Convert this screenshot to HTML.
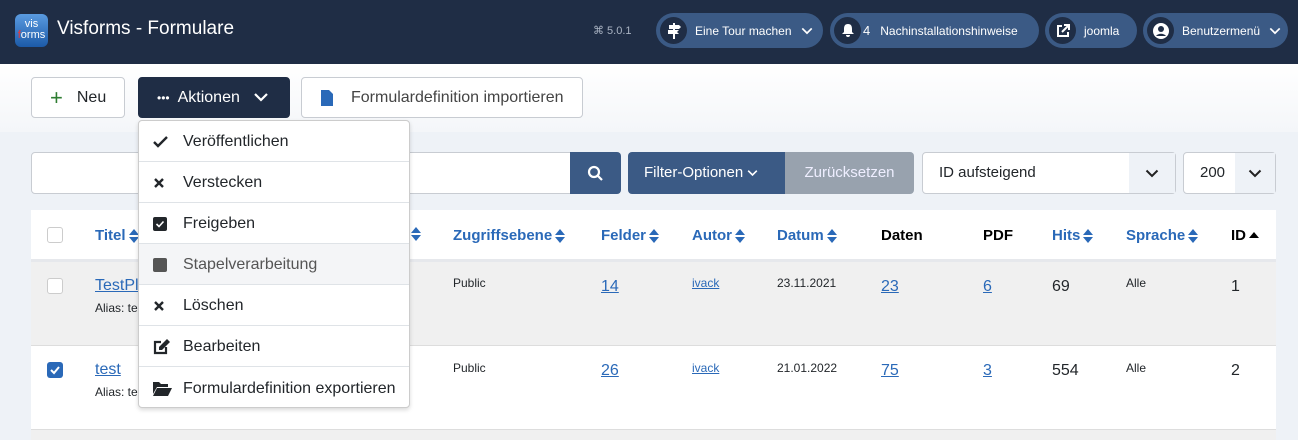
<!DOCTYPE html>
<html><head><meta charset="utf-8"><style>
*{box-sizing:border-box;margin:0;padding:0}
body{width:1298px;height:440px;overflow:hidden;background:#eef2f7;font-family:"Liberation Sans",sans-serif;position:relative;color:#22262a}
.abs{position:absolute}
.hdr{left:0;top:0;width:1298px;height:64px;background:#1f2d45}
.pill{top:13px;height:35px;border-radius:18px;background:#3b5a85;color:#fff;font-size:12px;display:flex;align-items:center}
.pill .ic{width:27px;height:27px;border-radius:50%;background:#1f2d45;margin-left:4px;display:flex;align-items:center;justify-content:center;margin-right:8px}
.tb{left:0;top:64px;width:1298px;height:68px;background:linear-gradient(#fff,#f4f6f9)}
.btn{top:77px;height:41px;border:1px solid #c8ccd2;border-radius:4px;background:#fff;font-size:16px;display:flex;align-items:center;color:#22262a}
.menu{left:138px;top:120px;width:272px;height:288px;background:#fff;border:1px solid #ccc;border-radius:4px;box-shadow:0 2px 4px rgba(0,0,0,.15);z-index:5}
.mi{height:41px;border-bottom:1px solid #dfe3e7;display:flex;align-items:center;font-size:16px;padding-left:14px;padding-top:2px}
.mi:last-child{border-bottom:none}
.mi .i{width:30px;display:flex;align-items:center}
.th{font-size:15px;font-weight:bold;color:#2a69b8;top:227px;display:flex;align-items:center}
.th.k{color:#000}
.c{font-size:12px}
.l{color:#2a69b8;text-decoration:underline;font-size:16px}
.s{margin-left:3px}
</style></head><body>
<svg width="0" height="0" style="position:absolute"><defs><symbol id="srt" viewBox="0 0 10 14"><path d="M5 0l5 6H0zM5 14L0 8h10z" fill="#2a69b8"/></symbol><symbol id="chv" viewBox="0 0 14 9"><path d="M1.5 1.5l5.5 5.5 5.5-5.5" stroke="currentColor" stroke-width="2" fill="none"/></symbol></defs></svg>
<div class="abs hdr"></div>
<div class="abs" style="left:15px;top:14px;width:33px;height:33px;border-radius:6px;background:linear-gradient(#5a9be0,#1c5aa8);color:#fff;font-size:11px;line-height:11px;text-align:center;padding-top:5px">vis<br><span style="color:#e33">f</span>orms</div>
<div class="abs" style="left:57px;top:18px;color:#fff;font-size:19px">Visforms - Formulare</div>
<div class="abs" style="left:593px;top:24px;color:#aab4c3;font-size:11px">⌘ 5.0.1</div>
<div class="abs pill" style="left:656px;width:167px"><span class="ic"><svg width="14" height="16" viewBox="0 0 14 16"><path d="M7 0v16" stroke="#fff" stroke-width="2"/><path d="M2 2h10l2 2-2 2H2zM1 7h11l-2 2 2 2H1z" fill="#fff"/></svg></span>Eine Tour machen<svg style="margin-left:9px;color:#fff" width="12" height="8"><use href="#chv"/></svg></div>
<div class="abs pill" style="left:830px;width:209px"><span class="ic"><svg width="14" height="15" viewBox="0 0 14 15"><path d="M7 1c3 0 4 2 4 5v3l2 2H1l2-2V6c0-3 1-5 4-5zM5 12h4a2 2 0 01-4 0z" fill="#fff"/></svg></span><span style="font-size:13px;margin-left:-6px;margin-right:10px">4</span>Nachinstallationshinweise</div>
<div class="abs pill" style="left:1045px;width:92px"><span class="ic"><svg width="14" height="14" viewBox="0 0 14 14" fill="none" stroke="#fff" stroke-width="2"><path d="M6 2H2v10h10V8M8 1h5v5M13 1L6 8"/></svg></span>joomla</div>
<div class="abs pill" style="left:1143px;width:145px"><span class="ic"><svg width="18" height="18" viewBox="0 0 18 18"><circle cx="9" cy="9" r="8" fill="#fff"/><circle cx="9" cy="7" r="3" fill="#1f2d45"/><path d="M4 14c2-3 8-3 10 0" fill="#1f2d45"/></svg></span>Benutzermenü<svg style="margin-left:9px;color:#fff" width="12" height="8"><use href="#chv"/></svg></div>

<div class="abs tb"></div>
<div class="abs btn" style="left:31px;width:94px;padding-left:18px"><span style="color:#2e7d32;font-size:22px;margin-right:14px">+</span>Neu</div>
<div class="abs btn" style="left:138px;width:152px;background:#1f2d45;border-color:#1f2d45;color:#fff;padding-left:18px"><span style="font-size:12px;margin-right:8px">•••</span>Aktionen<span style="margin-left:14px"><svg width="14" height="9" viewBox="0 0 14 9"><path d="M1 1l6 6 6-6" stroke="#fff" stroke-width="2.2" fill="none"/></svg></span></div>
<div class="abs btn" style="left:301px;width:282px;padding-left:19px"><svg width="12" height="16" viewBox="0 0 12 16"><path d="M0 0h8l4 4v12H0z" fill="#2a69b8"/></svg><span style="margin-left:18px;color:#444">Formulardefinition importieren</span></div>

<div class="abs" style="left:31px;top:152px;width:540px;height:42px;background:#fff;border:1px solid #c8ccd2;border-radius:4px 0 0 4px"></div>
<div class="abs" style="left:570px;top:152px;width:51px;height:42px;background:#3b5a85;border-radius:0 4px 4px 0"><svg style="margin:13px 0 0 17px" width="16" height="16" viewBox="0 0 16 16" fill="none" stroke="#fff" stroke-width="2.2"><circle cx="7" cy="7" r="5"/><path d="M11 11l4 4"/></svg></div>
<div class="abs" style="left:628px;top:152px;width:157px;height:42px;background:#3b5a85;border-radius:4px 0 0 4px;color:#fff;font-size:15px;line-height:42px;padding-left:16px">Filter-Optionen <svg style="color:#fff" width="11" height="8"><use href="#chv"/></svg></div>
<div class="abs" style="left:785px;top:152px;width:129px;height:42px;background:#98a2ae;border-radius:0 4px 4px 0;color:#eef;font-size:15px;line-height:42px;text-align:center">Zurücksetzen</div>
<div class="abs" style="left:922px;top:152px;width:254px;height:42px;background:#fff;border:1px solid #c8ccd2;border-radius:4px;font-size:15px;line-height:40px;padding-left:16px">ID aufsteigend<div class="abs" style="right:0;top:0;width:46px;height:40px;background:#eef2f7;text-align:center;color:#222"><svg style="margin-top:16px" width="14" height="9"><use href="#chv"/></svg></div></div>
<div class="abs" style="left:1183px;top:152px;width:93px;height:42px;background:#fff;border:1px solid #c8ccd2;border-radius:4px;font-size:15px;line-height:40px;padding-left:16px">200<div class="abs" style="right:0;top:0;width:40px;height:40px;background:#eef2f7;text-align:center;color:#222"><svg style="margin-top:16px" width="14" height="9"><use href="#chv"/></svg></div></div>

<div class="abs" style="left:31px;top:210px;width:1245px;height:52px;background:#fff;border-bottom:3px solid #e6e8ec"></div>
<div class="abs" style="left:31px;top:262px;width:1245px;height:84px;background:#f0f0f0;border-bottom:1px solid #ddd"></div>
<div class="abs" style="left:31px;top:346px;width:1245px;height:84px;background:#fff;border-bottom:1px solid #ddd"></div>
<div class="abs" style="left:31px;top:430px;width:1245px;height:10px;background:#f0f0f0"></div>

<div class="abs" style="left:47px;top:227px;width:16px;height:16px;border:1px solid #ccc;border-radius:3px;background:#fff"></div>
<div class="abs" style="left:47px;top:278px;width:16px;height:16px;border:1px solid #ccc;border-radius:3px;background:#fff"></div>
<div class="abs" style="left:47px;top:362px;width:16px;height:16px;border-radius:3px;background:#2a69b8"><svg width="16" height="16" viewBox="0 0 16 16"><path d="M4 8l3 3 5-6" stroke="#fff" stroke-width="2" fill="none"/></svg></div>

<div class="abs th" style="left:95px">Titel<svg class="s" width="10" height="14"><use href="#srt"/></svg></div>
<div class="abs th" style="left:411px"><svg width="10" height="14"><use href="#srt"/></svg></div>
<div class="abs th" style="left:453px">Zugriffsebene<svg class="s" width="10" height="14"><use href="#srt"/></svg></div>
<div class="abs th" style="left:601px">Felder<svg class="s" width="10" height="14"><use href="#srt"/></svg></div>
<div class="abs th" style="left:692px">Autor<svg class="s" width="10" height="14"><use href="#srt"/></svg></div>
<div class="abs th" style="left:777px">Datum<svg class="s" width="10" height="14"><use href="#srt"/></svg></div>
<div class="abs th k" style="left:881px">Daten</div>
<div class="abs th k" style="left:983px">PDF</div>
<div class="abs th" style="left:1052px">Hits<svg class="s" width="10" height="14"><use href="#srt"/></svg></div>
<div class="abs th" style="left:1126px">Sprache<svg class="s" width="10" height="14"><use href="#srt"/></svg></div>
<div class="abs th k" style="left:1231px">ID<svg class="s" width="10" height="7" viewBox="0 0 10 7"><path d="M5 0l5 6H0z" fill="#000"/></svg></div>

<div class="abs l" style="left:95px;top:277px">TestPl</div>
<div class="abs c" style="left:95px;top:301px">Alias: te</div>
<div class="abs l" style="left:95px;top:361px">test</div>
<div class="abs c" style="left:95px;top:385px">Alias: te</div>

<div class="abs c" style="left:453px;top:276px">Public</div>
<div class="abs l" style="left:601px;top:278px">14</div>
<div class="abs l c" style="left:692px;top:276px;font-size:12px">ivack</div>
<div class="abs c" style="left:777px;top:276px">23.11.2021</div>
<div class="abs l" style="left:881px;top:278px">23</div>
<div class="abs l" style="left:983px;top:278px">6</div>
<div class="abs" style="left:1052px;top:278px;font-size:16px">69</div>
<div class="abs c" style="left:1126px;top:276px">Alle</div>
<div class="abs" style="left:1231px;top:278px;font-size:16px">1</div>

<div class="abs c" style="left:453px;top:361px">Public</div>
<div class="abs l" style="left:601px;top:362px">26</div>
<div class="abs l" style="left:692px;top:361px;font-size:12px">ivack</div>
<div class="abs c" style="left:777px;top:361px">21.01.2022</div>
<div class="abs l" style="left:881px;top:362px">75</div>
<div class="abs l" style="left:983px;top:362px">3</div>
<div class="abs" style="left:1052px;top:362px;font-size:16px">554</div>
<div class="abs c" style="left:1126px;top:361px">Alle</div>
<div class="abs" style="left:1231px;top:362px;font-size:16px">2</div>

<div class="abs menu">
<div class="mi"><span class="i"><svg width="15" height="12" viewBox="0 0 15 12"><path d="M1 6l4 4 9-9" stroke="#22262a" stroke-width="2.4" fill="none"/></svg></span>Veröffentlichen</div>
<div class="mi"><span class="i"><svg width="12" height="12" viewBox="0 0 12 12"><path d="M2 2l8 8M10 2l-8 8" stroke="#22262a" stroke-width="2.4"/></svg></span>Verstecken</div>
<div class="mi"><span class="i"><svg width="14" height="14" viewBox="0 0 14 14"><rect width="14" height="14" rx="2" fill="#22262a"/><path d="M3.5 7l2.5 2.5 4.5-5" stroke="#fff" stroke-width="1.6" fill="none"/></svg></span>Freigeben</div>
<div class="mi" style="background:#f4f5f7;color:#555"><span class="i"><svg width="14" height="14"><rect width="14" height="14" rx="2" fill="#555"/></svg></span>Stapelverarbeitung</div>
<div class="mi"><span class="i"><svg width="12" height="12" viewBox="0 0 12 12"><path d="M2 2l8 8M10 2l-8 8" stroke="#22262a" stroke-width="2.4"/></svg></span>Löschen</div>
<div class="mi"><span class="i"><svg width="17" height="16" viewBox="0 0 17 16"><path d="M8 3H2v11h11V8" stroke="#22262a" stroke-width="2.2" fill="none"/><path d="M14 0l3 3-8 8H6V8z" fill="#22262a"/></svg></span>Bearbeiten</div>
<div class="mi"><span class="i"><svg width="19" height="15" viewBox="0 0 19 15"><path d="M0 1h6l2 2h7v3H4L0 13z M4 7h15l-4 8H0z" fill="#22262a"/></svg></span>Formulardefinition exportieren</div>
</div>
</body></html>
